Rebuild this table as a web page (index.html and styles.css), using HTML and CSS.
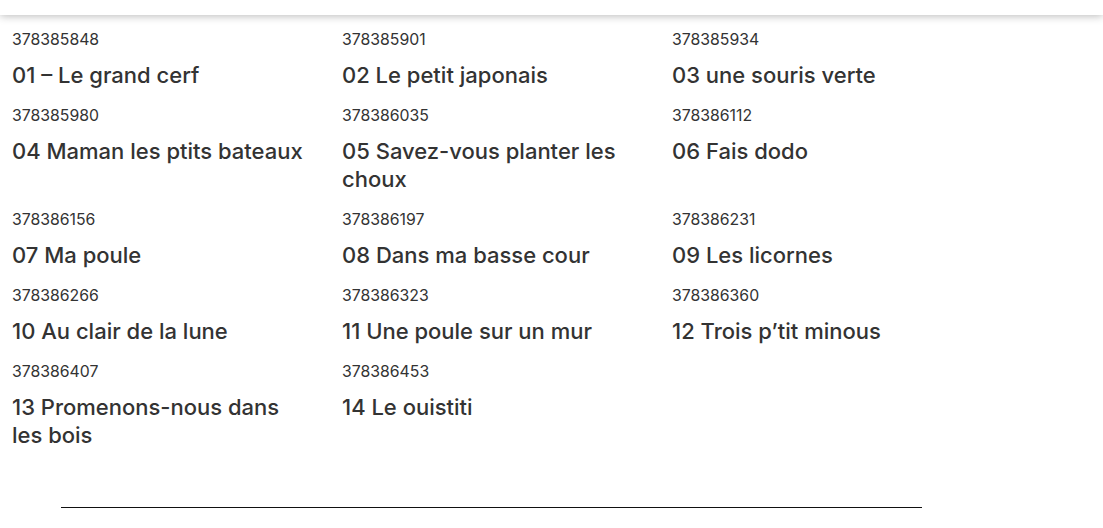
FILE: index.html
```html
<!DOCTYPE html>
<html lang="fr">
<head>
<meta charset="utf-8">
<link rel="stylesheet" href="styles.css">
</head>
<body>
<header class="topbar"></header>
<main class="list">
  <div class="item"><div class="id">378385848</div><div class="title">01 – Le grand cerf</div></div>
  <div class="item"><div class="id">378385901</div><div class="title">02 Le petit japonais</div></div>
  <div class="item"><div class="id">378385934</div><div class="title">03 une souris verte</div></div>
  <div class="item"><div class="id">378385980</div><div class="title">04 Maman les ptits bateaux</div></div>
  <div class="item"><div class="id">378386035</div><div class="title">05 Savez-vous planter les choux</div></div>
  <div class="item"><div class="id">378386112</div><div class="title">06 Fais dodo</div></div>
  <div class="item"><div class="id">378386156</div><div class="title">07 Ma poule</div></div>
  <div class="item"><div class="id">378386197</div><div class="title">08 Dans ma basse cour</div></div>
  <div class="item"><div class="id">378386231</div><div class="title">09 Les licornes</div></div>
  <div class="item"><div class="id">378386266</div><div class="title">10 Au clair de la lune</div></div>
  <div class="item"><div class="id">378386323</div><div class="title">11 Une poule sur un mur</div></div>
  <div class="item"><div class="id">378386360</div><div class="title">12 Trois p’tit minous</div></div>
  <div class="item"><div class="id">378386407</div><div class="title">13 Promenons-nous dans les bois</div></div>
  <div class="item"><div class="id">378386453</div><div class="title">14 Le ouistiti</div></div>
</main>
<footer class="footer"><hr class="rule"></footer>
</body>
</html>
```

FILE: styles.css
```css
* { box-sizing: border-box; }
html, body { margin: 0; padding: 0; background: #fff; }
body {
  font-family: Inter, "Noto Sans", sans-serif;
  color: #333;
  overflow: hidden;
}
.topbar {
  height: 15px;
  background: #fff;
  box-shadow: 0 1px 8px rgba(0,0,0,0.28);
  position: relative;
  z-index: 1;
}
.list {
  display: grid;
  grid-template-columns: repeat(3, 330px);
  padding: 15px 0 0 12px;
}
.item {
  padding-right: 30px;
  padding-bottom: 17px;
}
.id {
  font-size: 15.8px;
  line-height: 20px;
  margin-bottom: 11px;
  font-weight: 400;
}
.title {
  font-size: 22px;
  line-height: 28px;
  font-weight: 500;
}
.footer {
  padding: 41px 0 0 61px;
}
.rule {
  width: 861px;
  margin: 0;
  border: 0;
  border-top: 1px solid #111;
  height: 0;
}
```
